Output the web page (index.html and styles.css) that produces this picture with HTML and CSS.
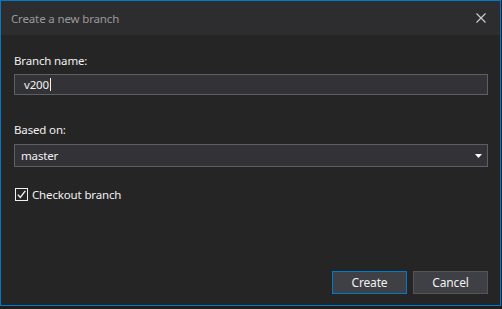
FILE: index.html
```html
<!DOCTYPE html>
<html lang="en">
<head>
  <meta charset="UTF-8">
  <title>Create a new branch</title>
  <link rel="stylesheet" href="styles.css">
</head>
<body>
  <div class="dialog">
    <!-- Title bar -->
    <div class="title-bar">
      <span class="title">Create a new branch</span>
      <svg class="close" width="10" height="10" viewBox="0 0 10 10">
        <path d="M0.5 0.5 L9.5 9.5 M9.5 0.5 L0.5 9.5" stroke="#d0d0d0" stroke-width="1.1" fill="none"/>
      </svg>
    </div>

    <div class="content">
      <label class="field-label">Branch name:</label>
      <div class="text-input">v200<span class="caret"></span></div>

      <label class="field-label second">Based on:</label>
      <div class="select">
        <span>master</span>
        <svg class="arrow" width="7" height="4" viewBox="0 0 7 4">
          <path d="M0 0 H7 L3.5 4 Z" fill="#ffffff"/>
        </svg>
      </div>

      <div class="checkbox-row">
        <span class="checkbox">
          <svg width="11" height="11" viewBox="0 0 11 11">
            <path d="M1.8 5.6 L4.3 8.4 L9.3 1.8" stroke="#f1f1f1" stroke-width="1.4" fill="none"/>
          </svg>
        </span>
        <span>Checkout branch</span>
      </div>

      <div class="actions">
        <button class="primary">Create</button>
        <button>Cancel</button>
      </div>
    </div>
  </div>
</body>
</html>
```

FILE: styles.css
```css
body {
  margin: 0;
  background-color: #1e1e1e;
  font-family: 'Segoe UI', 'Noto Sans', sans-serif;
  font-size: 11.5px;
  letter-spacing: -0.15px;
  color: #f1f1f1;
}

.dialog {
  width: 501px;
  height: 306px;
  box-sizing: border-box;
  border: 1px solid #007acc;
  background-color: #252526;
  display: flex;
  flex-direction: column;
}

/* Title bar */
.title-bar {
  height: 34px;
  background-color: #2d2d30;
  display: flex;
  align-items: center;
  justify-content: space-between;
  padding: 0 14px 0 10px;
}

.title {
  color: #999999;
  line-height: 16px;
  margin-top: 2px;
}

.close {
  display: block;
}

/* Form */
.content {
  flex: 1;
  display: flex;
  flex-direction: column;
  padding: 18px 12px 11px 13px;
}

.field-label {
  display: block;
  line-height: 16px;
  margin-bottom: 5px;
}

.field-label.second {
  margin-top: 27px;
  margin-bottom: 6px;
}

.text-input {
  height: 21px;
  box-sizing: border-box;
  border: 1px solid #5e5e63;
  background-color: #333337;
  padding: 0 0 0 9px;
  line-height: 19px;
  display: flex;
  align-items: center;
}

.caret {
  display: inline-block;
  width: 1px;
  height: 13px;
  background-color: #f1f1f1;
  margin-left: 1px;
}

.select {
  height: 23px;
  box-sizing: border-box;
  border: 1px solid #5e5e63;
  background-color: #333337;
  padding: 0 5px 0 6px;
  display: flex;
  align-items: center;
  justify-content: space-between;
}

.arrow {
  display: block;
}

.checkbox-row {
  display: flex;
  align-items: center;
  margin-top: 21px;
  height: 13px;
}

.checkbox {
  width: 13px;
  height: 13px;
  box-sizing: border-box;
  border: 1px solid #f1f1f1;
  display: flex;
  align-items: center;
  justify-content: center;
  margin-left: 1px;
  margin-right: 4px;
}

.checkbox svg {
  display: block;
}

.actions {
  margin-top: auto;
  display: flex;
  justify-content: flex-end;
  gap: 6px;
}

.actions button {
  width: 75px;
  height: 23px;
  box-sizing: border-box;
  background-color: #3f3f46;
  border: 1px solid #555555;
  color: #f1f1f1;
  font-family: inherit;
  font-size: 12px;
  letter-spacing: -0.15px;
  padding: 0;
}

.actions button.primary {
  border-color: #007acc;
}
```
